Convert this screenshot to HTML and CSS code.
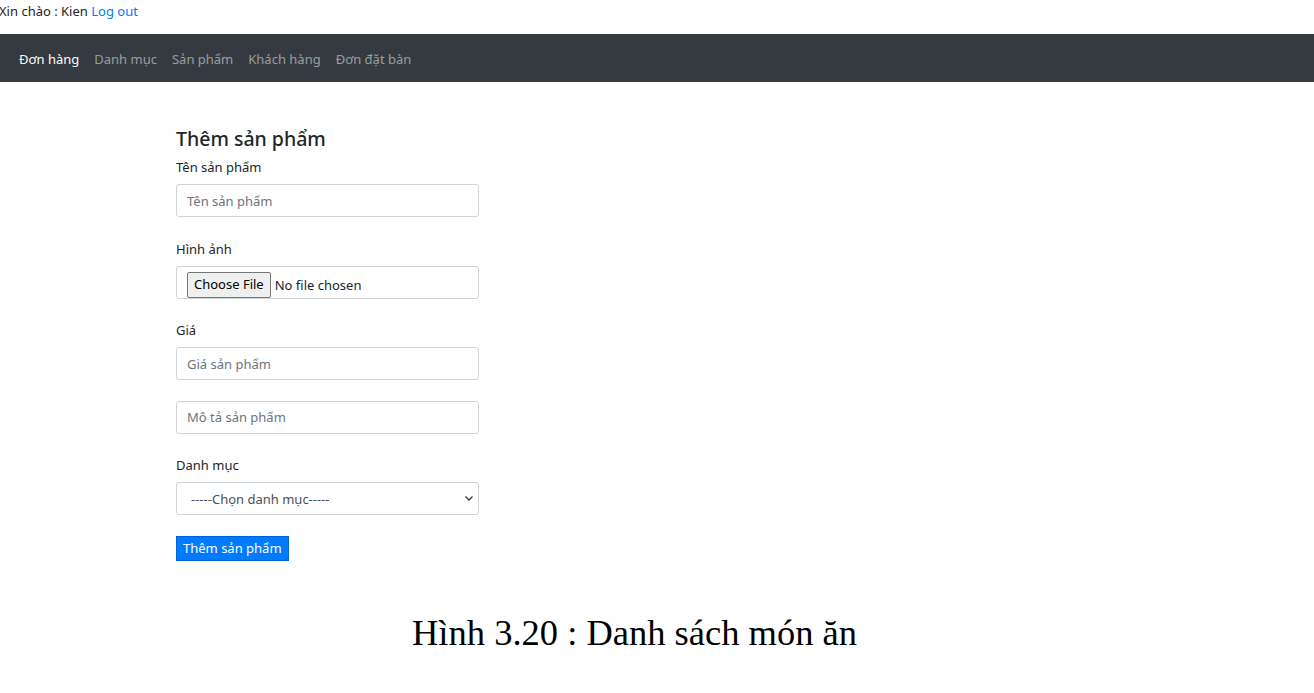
FILE: index.html
```html
<!DOCTYPE html>
<html lang="vi">
<head>
<meta charset="utf-8">
<title>Thêm sản phẩm</title>
<link rel="stylesheet" href="styles.css">
</head>
<body>
<div class="greeting">Xin chào : Kien <a href="#" class="logout">Log out</a></div>
<nav class="navbar">
  <a href="#" class="nav-link active">Đơn hàng</a>
  <a href="#" class="nav-link">Danh mục</a>
  <a href="#" class="nav-link">Sản phẩm</a>
  <a href="#" class="nav-link">Khách hàng</a>
  <a href="#" class="nav-link">Đơn đặt bàn</a>
</nav>
<main class="container">
  <h4 class="title">Thêm sản phẩm</h4>
  <div class="group">
    <label class="label">Tên sản phẩm</label>
    <div class="control"><span class="ph">Tên sản phẩm</span></div>
  </div>
  <div class="group">
    <label class="label">Hình ảnh</label>
    <div class="control file"><span class="file-btn">Choose File</span><span class="file-text">No file chosen</span></div>
  </div>
  <div class="group">
    <label class="label">Giá</label>
    <div class="control"><span class="ph">Giá sản phẩm</span></div>
  </div>
  <div class="group">
    <div class="control"><span class="ph">Mô tả sản phẩm</span></div>
  </div>
  <div class="group">
    <label class="label">Danh mục</label>
    <div class="control select"><span class="sel-text">-----Chọn danh mục-----</span>
      <svg class="chev" width="10" height="7" viewBox="0 0 10 7"><path d="M1.5 1.5 L5 5 L8.5 1.5" fill="none" stroke="#343a40" stroke-width="1.4"/></svg>
    </div>
  </div>
  <button class="btn">Thêm sản phẩm</button>
</main>
<p class="caption">Hình 3.20 : Danh sách món ăn</p>
</body>
</html>
```
FILE: styles.css
```css
* { box-sizing: border-box; }
body {
  margin: 0;
  font-family: "Noto Sans", "Open Sans", sans-serif;
  font-size: 13px;
  color: #212529;
  background: #fff;
}
.greeting {
  height: 34px;
  padding-top: 1px;
  line-height: 20px;
  margin-left: -1px;
}
.logout { color: #007bff; text-decoration: none; }
.navbar {
  height: 48px;
  background: #343a40;
  display: flex;
  align-items: center;
  padding-left: 19px;
  gap: 15px;
}
.nav-link {
  color: rgba(255,255,255,0.5);
  text-decoration: none;
  font-size: 13px;
  padding-top: 2px;
}
.nav-link.active { color: #fff; }
.container {
  padding-left: 176px;
  padding-top: 44px;
  width: 479px;
  box-sizing: content-box;
}
.title {
  margin: 0 0 4px;
  font-size: 19.5px;
  font-weight: 500;
  line-height: 26px;
}
.group { margin-bottom: 20.55px; }
.label {
  display: block;
  line-height: 20px;
  padding-top: 1px;
  margin-bottom: 7px;
}
.control {
  height: 33px;
  border: 1px solid #ced4da;
  border-radius: 3px;
  display: flex;
  align-items: center;
  padding: 0 10px;
  color: #6c757d;
  width: 303px;
}
.file { padding-left: 10px; align-items: flex-end; }
.file-btn {
  display: inline-block;
  background: #efefef;
  border: 1px solid #767676;
  border-radius: 2px;
  color: #000;
  padding: 0 6px;
  height: 26px;
  line-height: 23px;
  font-size: 13px;
}
.file-text { color: #212529; margin-left: 4px; line-height: 26px; }
.select { justify-content: space-between; color: #495057; padding-left: 14px; padding-right: 4px; }
.btn {
  display: block;
  margin-top: 4.5px;
  background: #007bff;
  color: #fff;
  border: 1px solid #0062cc;
  border-radius: 0;
  font-family: inherit;
  font-size: 13px;
  height: 25px;
  padding: 0 6px;
  line-height: 22px;
}
.caption {
  margin: 50px 0 0;
  font-family: "Liberation Serif", "Times New Roman", serif;
  font-size: 36.5px;
  padding-left: 412px;
  color: #000;
}
```
